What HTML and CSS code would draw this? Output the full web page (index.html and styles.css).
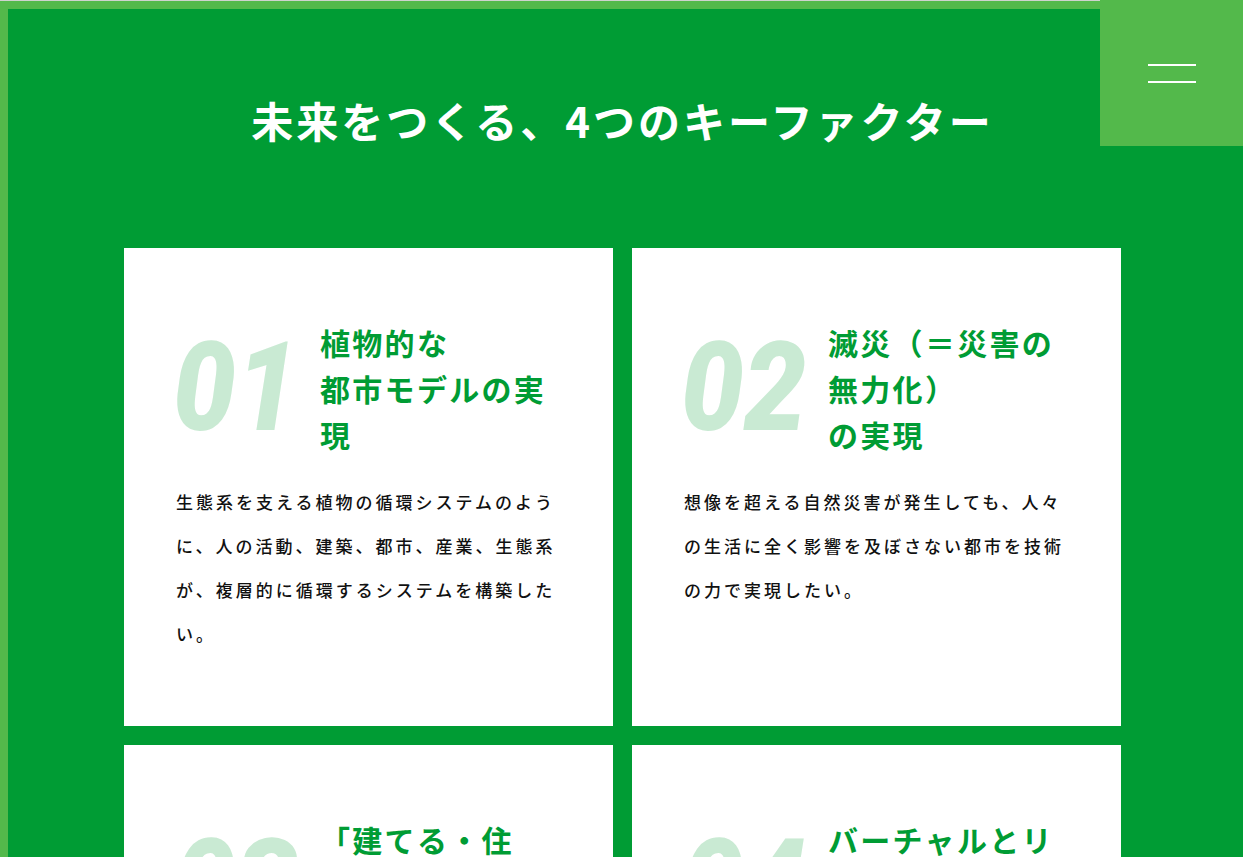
FILE: index.html
```html
<!DOCTYPE html>
<html lang="ja">
<head>
<meta charset="utf-8">
<title>未来をつくる、4つのキーファクター</title>
<link rel="stylesheet" href="styles.css">
</head>
<body>
<button class="menu" type="button" aria-label="メニュー">
  <span class="menu-line"></span>
  <span class="menu-line"></span>
</button>
<section class="factors">
  <h1 class="factors-title">未来をつくる、4つのキーファクター</h1>
  <div class="cards">
    <article class="card">
      <div class="card-head">
        <span class="card-num">01</span>
        <h2 class="card-title">植物的な<br>都市モデルの実現</h2>
      </div>
      <p class="card-text">生態系を支える植物の循環システムのように、人の活動、建築、都市、産業、生態系が、複層的に循環するシステムを構築したい。</p>
    </article>
    <article class="card">
      <div class="card-head">
        <span class="card-num">02</span>
        <h2 class="card-title">滅災（＝災害の無力化）<br>の実現</h2>
      </div>
      <p class="card-text">想像を超える自然災害が発生しても、人々の生活に全く影響を及ぼさない都市を技術の力で実現したい。</p>
    </article>
    <article class="card">
      <div class="card-head">
        <span class="card-num">03</span>
        <h2 class="card-title">「建てる・住む」から<br>の解放</h2>
      </div>
      <p class="card-text">建てることや住むことの制約から人々を解放し、より自由な暮らしを実現したい。</p>
    </article>
    <article class="card">
      <div class="card-head">
        <span class="card-num">04</span>
        <h2 class="card-title">バーチャルとリアルの融合<br>の実現</h2>
      </div>
      <p class="card-text">バーチャルとリアルが融合した新しい都市のあり方を実現したい。</p>
    </article>
  </div>
</section>
</body>
</html>
```

FILE: styles.css
```css
html {
  overflow: hidden;
}

body {
  margin: 0;
  background: #53b94b;
  border-top: 1px solid #cfd3cf;
  font-family: "Noto Sans CJK JP", "Noto Sans", sans-serif;
}

.menu {
  position: absolute;
  top: 0;
  right: 0;
  width: 143px;
  height: 146px;
  margin: 0;
  padding: 0;
  border: 0;
  background: #53b94b;
  display: flex;
  flex-direction: column;
  align-items: center;
  justify-content: center;
  gap: 15px;
  cursor: pointer;
}

.menu-line {
  display: block;
  width: 48px;
  height: 2px;
  background: #ffffff;
}

.factors {
  margin: 8px 0 0 8px;
  background: #009c34;
  padding: 90px 122px 120px 116px;
}

.factors-title {
  margin: 0 0 107px;
  color: #ffffff;
  font-size: 42px;
  font-weight: 700;
  line-height: 42px;
  letter-spacing: 3px;
  text-align: center;
}

.cards {
  display: grid;
  grid-template-columns: 489px 489px;
  gap: 19px;
}

.card {
  background: #ffffff;
  padding: 71px 52px 69px;
  min-height: 338px;
}

.card-head {
  display: flex;
  align-items: center;
}

.card-num {
  flex: 0 0 144px;
  color: #c9ead3;
  font-family: Roboto, "Liberation Sans", sans-serif;
  font-style: italic;
  font-weight: 900;
  font-size: 124px;
  line-height: 1;
  transform: translateX(-3px) scaleX(0.9);
  transform-origin: left center;
  white-space: nowrap;
}

.card-title {
  margin: 0;
  color: #009c34;
  font-size: 30px;
  font-weight: 700;
  line-height: 46px;
  letter-spacing: 2.3px;
}

.card-text {
  margin: 23px 0 0;
  color: #111111;
  font-size: 17px;
  font-weight: 500;
  line-height: 44px;
  letter-spacing: 3px;
}
```
